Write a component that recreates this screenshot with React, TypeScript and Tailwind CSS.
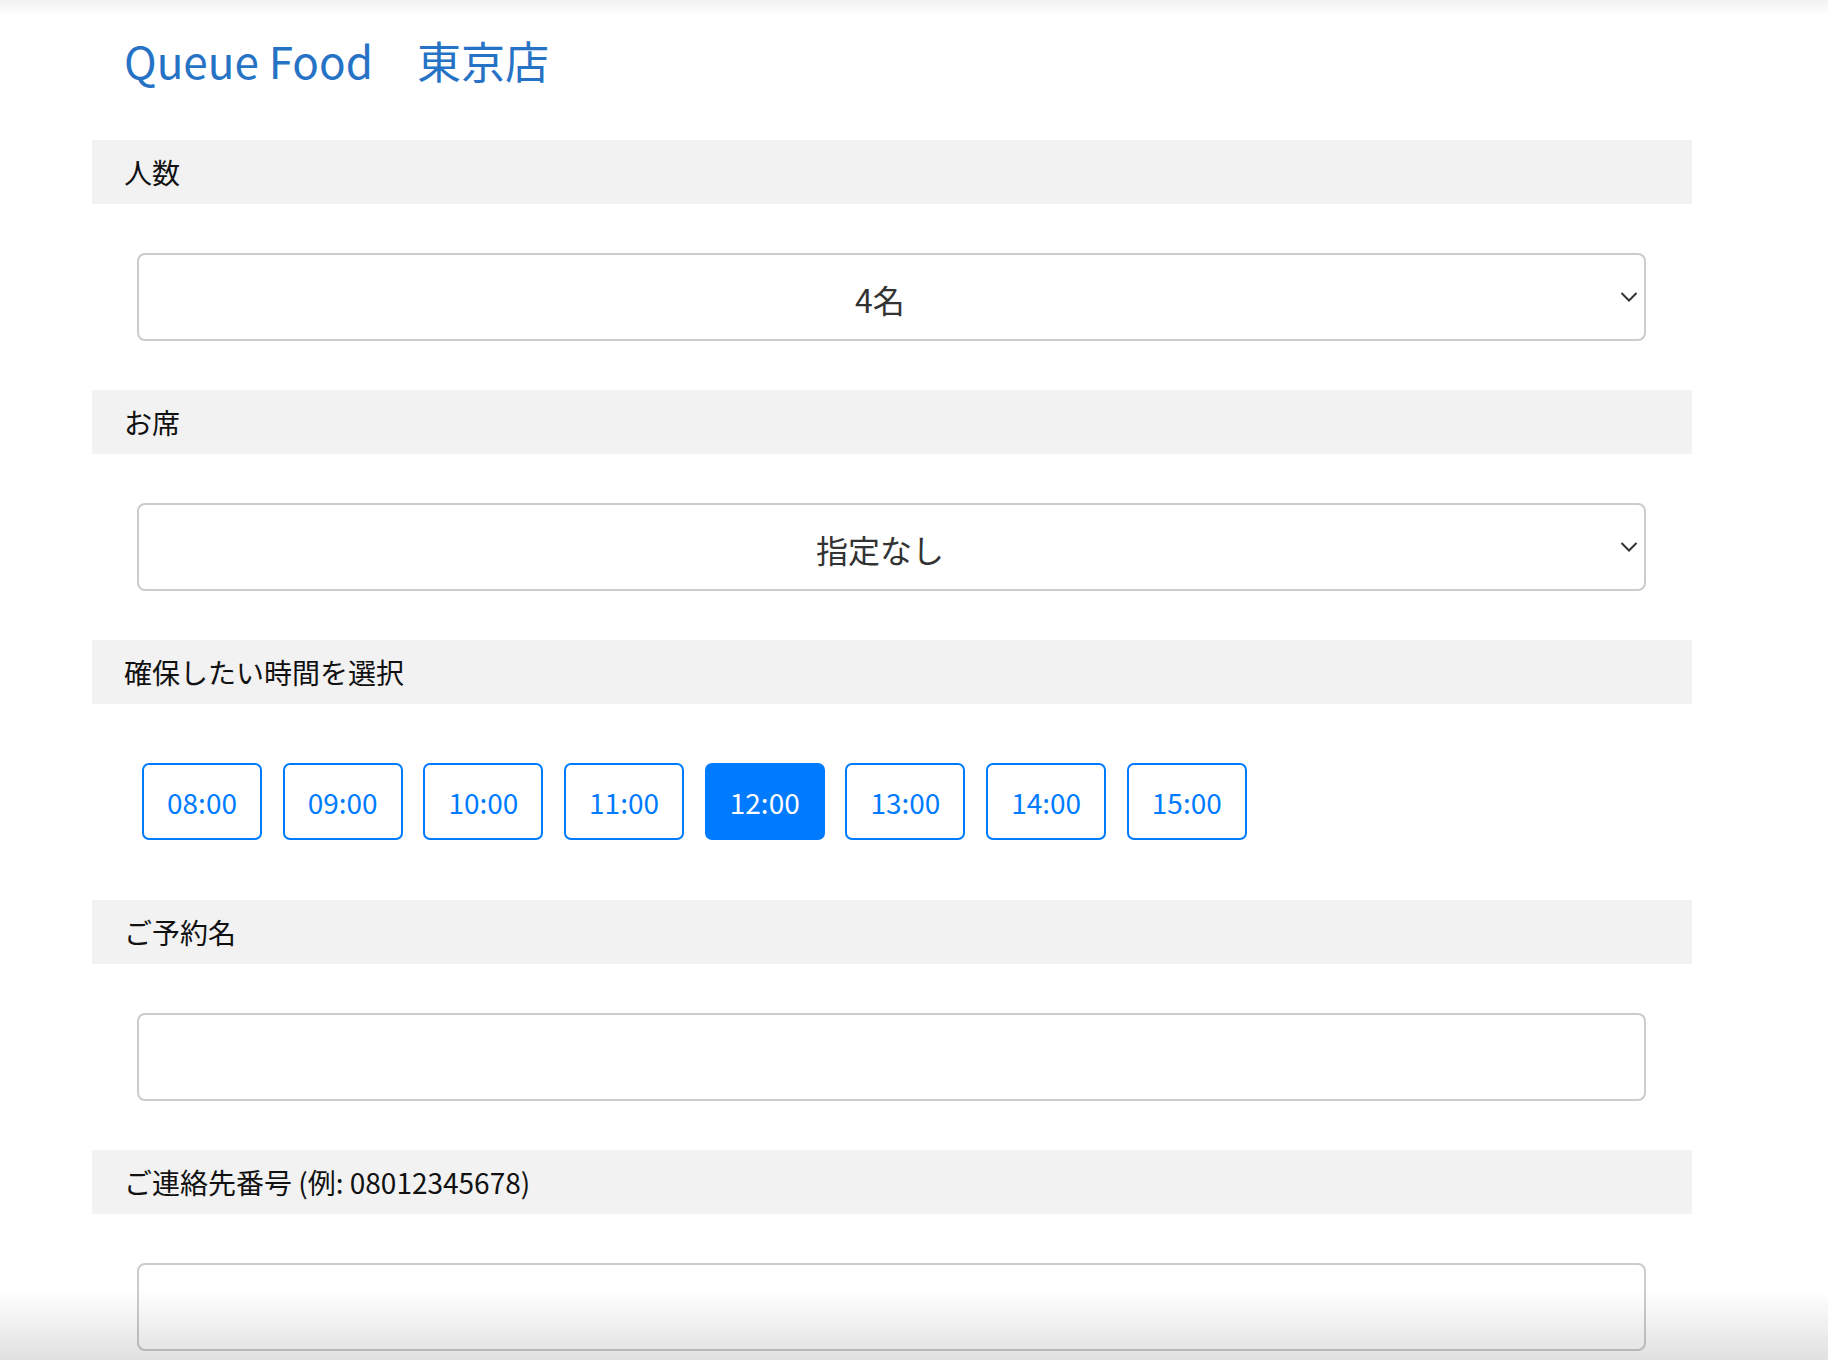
import { useState } from "react";

// 予約フォーム: 人数・席・時間・名前・連絡先

const TIMES = ["08:00", "09:00", "10:00", "11:00", "12:00", "13:00", "14:00", "15:00"];

function SectionLabel({ children }: { children: React.ReactNode }) {
  return (
    <div className="flex h-16 items-center bg-[#f2f2f2] pl-8 text-[28px] text-[#111]">
      {children}
    </div>
  );
}

function Chevron() {
  return (
    <svg
      className="absolute right-[6px] top-1/2 -translate-y-1/2"
      width="18"
      height="11"
      viewBox="0 0 18 11"
      fill="none"
    >
      <path d="M1.5 1.5 L9 9 L16.5 1.5" stroke="#333" strokeWidth="2" />
    </svg>
  );
}

function FakeSelect({ value }: { value: string }) {
  return (
    <div className="relative flex h-[88px] w-[1509px] items-center justify-center rounded-lg border-2 border-[#cccccc] bg-white pr-[23px] pt-[3px] text-[32px] text-[#333]">
      <span>{value}</span>
      <Chevron />
    </div>
  );
}

function TextBox() {
  return (
    <input
      type="text"
      className="h-[88px] w-[1509px] rounded-lg border-2 border-[#cccccc] bg-white px-4 text-[30px] text-[#333] outline-none"
    />
  );
}

export default function App() {
  const [time, setTime] = useState("12:00");

  return (
    <div className="relative min-h-[1360px] overflow-hidden bg-white font-['Noto_Sans_CJK_JP',sans-serif]">
      <div className="ml-[92px] w-[1600px]">
        <header className="h-[140px] pl-8 pt-[38px]">
          <h1 className="text-[44px] leading-none text-[#2673c6]">Queue Food　東京店</h1>
        </header>

        <SectionLabel>人数</SectionLabel>
        <div className="px-[45px] py-[49px]">
          <FakeSelect value="4名" />
        </div>

        <SectionLabel>お席</SectionLabel>
        <div className="px-[45px] py-[49px]">
          <FakeSelect value="指定なし" />
        </div>

        <SectionLabel>確保したい時間を選択</SectionLabel>
        <div className="flex gap-[20.7px] pl-[50px] pt-[59px] pb-[60px]">
          {TIMES.map((t) => {
            const active = t === time;
            return (
              <button
                key={t}
                type="button"
                onClick={() => setTime(t)}
                className={
                  active
                    ? "h-[77px] w-[120px] rounded-[7px] border-2 border-[#007bff] bg-[#007bff] text-[28px] text-white"
                    : "h-[77px] w-[120px] rounded-[7px] border-2 border-[#007bff] bg-white text-[28px] text-[#007bff]"
                }
              >
                {t}
              </button>
            );
          })}
        </div>

        <SectionLabel>ご予約名</SectionLabel>
        <div className="px-[45px] py-[49px]">
          <TextBox />
        </div>

        <SectionLabel>ご連絡先番号 (例: 08012345678)</SectionLabel>
        <div className="px-[45px] py-[49px]">
          <TextBox />
        </div>
      </div>

      {/* screenshot edge shading */}
      <div className="pointer-events-none absolute inset-x-0 top-0 h-4 bg-linear-to-b from-black/[0.05] to-transparent" />
      <div className="pointer-events-none absolute inset-x-0 top-[1290px] h-[70px] bg-linear-to-b from-transparent to-black/[0.12]" />
    </div>
  );
}
